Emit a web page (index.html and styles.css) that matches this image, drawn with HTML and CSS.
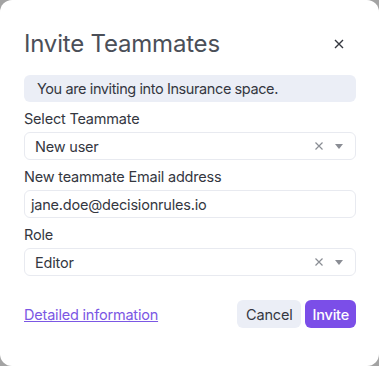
FILE: index.html
```html
<!DOCTYPE html>
<html lang="en">
<head>
  <meta charset="UTF-8" />
  <title>Invite Teammates</title>
  <link rel="stylesheet" href="styles.css">
</head>
<body>
  <div class="modal">
    <div class="modal-header">
      <h2>Invite Teammates</h2>
      <svg class="close" width="10" height="10" viewBox="0 0 10 10"><path d="M1 1L9 9M9 1L1 9" stroke="#34373f" stroke-width="1.4" /></svg>
    </div>

    <div class="info">You are inviting into Insurance space.</div>

    <label class="label">Select Teammate</label>
    <div class="select">
      <span class="value">New user</span>
      <svg class="clear" width="8" height="8" viewBox="0 0 8 8"><path d="M0.5 0.5L7.5 7.5M7.5 0.5L0.5 7.5" stroke="#8a8d94" stroke-width="1.2" /></svg>
      <span class="arrow"></span>
    </div>

    <label class="label">New teammate Email address</label>
    <div class="input">jane.doe@decisionrules.io</div>

    <label class="label">Role</label>
    <div class="select">
      <span class="value">Editor</span>
      <svg class="clear" width="8" height="8" viewBox="0 0 8 8"><path d="M0.5 0.5L7.5 7.5M7.5 0.5L0.5 7.5" stroke="#8a8d94" stroke-width="1.2" /></svg>
      <span class="arrow"></span>
    </div>

    <div class="footer">
      <a class="link" href="#">Detailed information</a>
      <div class="actions">
        <button class="btn btn-cancel">Cancel</button>
        <button class="btn btn-invite">Invite</button>
      </div>
    </div>
  </div>
</body>
</html>
```

FILE: styles.css
```css
body {
  margin: 0;
  background-color: #a3a3a3;
  font-family: 'Inter', 'Open Sans', sans-serif;
  color: #34373f;
}

.modal {
  width: 379px;
  height: 366px;
  box-sizing: border-box;
  background-color: #ffffff;
  border-radius: 12px;
  padding: 26px 23px 0 24px;
}

.modal-header {
  display: flex;
  justify-content: space-between;
  align-items: center;
  height: 34px;
}

.modal-header h2 {
  margin: 0;
  font-size: 24px;
  font-weight: 400;
  color: #4b4f58;
  letter-spacing: -0.2px;
}

.close {
  margin-right: 12px;
  margin-top: 1px;
}

.info {
  margin-top: 15px;
  height: 27px;
  line-height: 27px;
  padding-left: 13px;
  background-color: #ebeef6;
  border-radius: 6px;
  font-size: 14.5px;
  color: #34373f;
  letter-spacing: -0.4px;
}

.label {
  display: block;
  margin-top: 6px;
  height: 21px;
  line-height: 21px;
  font-size: 14.5px;
  color: #34373f;
  letter-spacing: -0.2px;
}

.select,
.input {
  margin-top: 3px;
  height: 28px;
  box-sizing: border-box;
  border: 1px solid #e8eaf0;
  border-radius: 6px;
  display: flex;
  align-items: center;
  padding: 0 12px 0 10px;
  font-size: 14.5px;
  color: #34373f;
  letter-spacing: -0.2px;
}

.input {
  padding-left: 6px;
}

.select .value {
  flex: 1;
}

.clear {
  margin-right: 12px;
}

.arrow {
  width: 0;
  height: 0;
  border-left: 4.5px solid transparent;
  border-right: 4.5px solid transparent;
  border-top: 5px solid #8a8d94;
}

.footer {
  margin-top: 24px;
  display: flex;
  justify-content: space-between;
  align-items: center;
}

.link {
  color: #7b57e4;
  font-size: 14.5px;
  letter-spacing: -0.2px;
}

.actions {
  display: flex;
  gap: 4px;
}

.btn {
  height: 28px;
  border: none;
  border-radius: 6px;
  font-family: inherit;
  font-size: 14.5px;
  padding: 0 9px;
  letter-spacing: -0.2px;
}

.btn-cancel {
  background-color: #ebeef6;
  color: #34373f;
}

.btn-invite {
  background-color: #7b4ee8;
  color: #ffffff;
  font-weight: 500;
  padding: 0 7px;
}
```
